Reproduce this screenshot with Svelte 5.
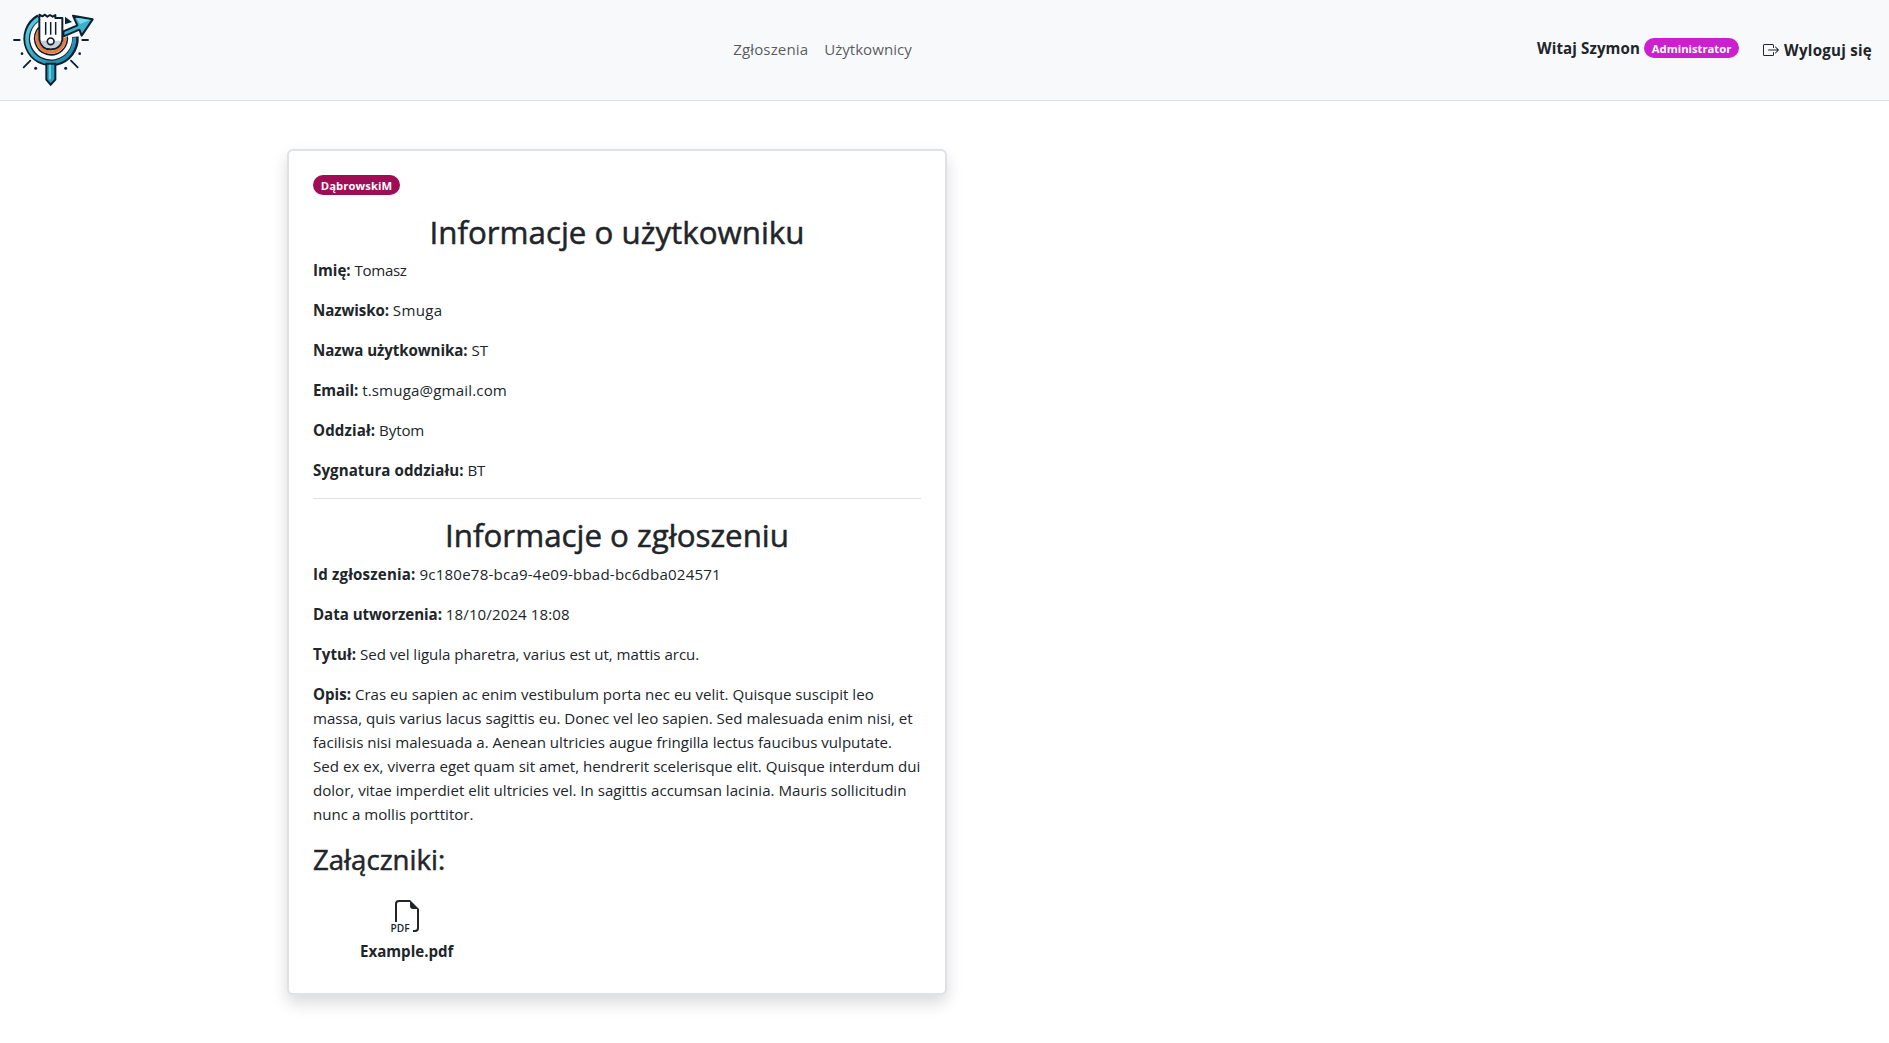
<script>
  // track: letter-spacing in px for each label and value
  const user = [
    { label: 'Imię:', lt: 0, value: 'Tomasz', vt: -0.35 },
    { label: 'Nazwisko:', lt: -0.1, value: 'Smuga', vt: 0.3 },
    { label: 'Nazwa użytkownika:', lt: -0.09, value: 'ST', vt: 0 },
    { label: 'Email:', lt: -0.12, value: 't.smuga@gmail.com', vt: 0.15 },
    { label: 'Oddział:', lt: 0.13, value: 'Bytom', vt: -0.12 },
    { label: 'Sygnatura oddziału:', lt: 0.07, value: 'BT', vt: -0.3 }
  ];
  const ticket = [
    { label: 'Id zgłoszenia:', lt: 0.18, value: '9c180e78-bca9-4e09-bbad-bc6dba024571', vt: 0.19 },
    { label: 'Data utworzenia:', lt: -0.05, value: '18/10/2024 18:08', vt: 0.09 },
    { label: 'Tytuł:', lt: 0.05, value: 'Sed vel ligula pharetra, varius est ut, mattis arcu.', vt: -0.03 },
    {
      label: 'Opis:',
      lt: 0,
      value: [
        'Cras eu sapien ac enim vestibulum porta nec eu velit. Quisque suscipit leo',
        'massa, quis varius lacus sagittis eu. Donec vel leo sapien. Sed malesuada enim nisi, et',
        'facilisis nisi malesuada a. Aenean ultricies augue fringilla lectus faucibus vulputate.',
        'Sed ex ex, viverra eget quam sit amet, hendrerit scelerisque elit. Quisque interdum dui',
        'dolor, vitae imperdiet elit ultricies vel. In sagittis accumsan lacinia. Mauris sollicitudin',
        'nunc a mollis porttitor.'
      ].join('\n'),
      vt: 0
    }
  ];
</script>

{#snippet field(f)}
  <p><b style:letter-spacing="{f.lt}px">{f.label}</b> <span style:letter-spacing="{f.vt}px">{f.value}</span></p>
{/snippet}

<header>
  <a class="brand" href="#top" aria-label="Logo">
    <svg width="80" height="80" viewBox="36 30 240 240">
      <defs>
        <linearGradient id="teal" x1="0" y1="0" x2="1" y2="1">
          <stop offset="0" stop-color="#5fd0e0" />
          <stop offset="0.5" stop-color="#35a9c4" />
          <stop offset="1" stop-color="#1c7fa3" />
        </linearGradient>
      </defs>
      <g fill="none">
        <path d="M117 52A73 73 0 1 0 226 110" stroke="#0b2033" stroke-width="20" />
        <path d="M117 55A71 71 0 1 0 223 112" stroke="url(#teal)" stroke-width="11" />
        <path d="M117 74A55 55 0 1 0 207 105" stroke="#fff" stroke-width="9" />
        <path d="M117 82A49 49 0 1 0 201 105" stroke="#0b2033" stroke-width="5" />
        <path d="M117 92A42 42 0 1 0 194 106" stroke="#e9793d" stroke-width="10" />
      </g>
      <path d="M139 191h27v48l-14 15-13-15z" fill="#2d9dbd" stroke="#0b2033" stroke-width="6" />
      <path d="M150 194v44" stroke="#65cfe0" stroke-width="6" />
      <path d="M186 84L225 68 210 38 290 52 246 122 234 95 190 115z" fill="#f8f9fa" />
      <path d="M190 94L232 76 219 47 278 58 245 107 238 89 191 109z" fill="#3ab2ca" stroke="#0b2033" stroke-width="6" stroke-linejoin="round" />
      <path d="M228 53L270 60 240 72z" fill="#7adbe8" />
      <path d="M195 50L216 66 195 73z" fill="#0b2033" />
      <path d="M118 44l9 5 8-5 7 6 8-5 8 5 8-5v9h21v66q-7 28-35 28t-34-30z" fill="#fff" stroke="#0b2033" stroke-width="6" stroke-linejoin="round" />
      <path d="M121 122h63q-9 23-32 23t-31-23z" fill="#c8ced4" />
      <path d="M137 66v38M152 66v38M167 66v38" stroke="#0b2033" stroke-width="4.5" />
      <circle cx="152" cy="124" r="10" fill="#fff" stroke="#0b2033" stroke-width="5" />
      <g stroke="#0b2033" stroke-width="5.5" stroke-linecap="round">
        <path d="M42 120h17M247 120h17M91 182L71 202M213 182L233 202" />
      </g>
      <g fill="#0b2033">
        <circle cx="66" cy="161" r="4" /><circle cx="239" cy="161" r="4" />
        <circle cx="107" cy="205" r="4.5" /><circle cx="197" cy="205" r="4.5" />
      </g>
    </svg>
  </a>
  <nav>
    <a class="tickets" href="#tickets">Zgłoszenia</a>
    <a href="#users">Użytkownicy</a>
  </nav>
  <div class="account">
    <div class="hello"><b>Witaj Szymon</b><span class="badge admin">Administrator</span></div>
    <a class="logout" href="#logout">
      <svg width="16" height="16" viewBox="0 0 16 16" fill="currentColor">
        <path fill-rule="evenodd" d="M10 12.5a.5.5 0 0 1-.5.5h-8a.5.5 0 0 1-.5-.5v-9a.5.5 0 0 1 .5-.5h8a.5.5 0 0 1 .5.5v2a.5.5 0 0 0 1 0v-2A1.5 1.5 0 0 0 9.5 2h-8A1.5 1.5 0 0 0 0 3.5v9A1.5 1.5 0 0 0 1.5 14h8a1.5 1.5 0 0 0 1.5-1.5v-2a.5.5 0 0 0-1 0z" />
        <path fill-rule="evenodd" d="M15.854 8.354a.5.5 0 0 0 0-.708l-3-3a.5.5 0 0 0-.708.708L14.293 7.5H5.5a.5.5 0 0 0 0 1h8.793l-2.147 2.146a.5.5 0 0 0 .708.708z" />
      </svg>
      <b>Wyloguj się</b>
    </a>
  </div>
</header>

<main>
  <section class="card">
    <span class="badge assignee">DąbrowskiM</span>
    <h2>Informacje o użytkowniku</h2>
    {#each user as f}{@render field(f)}{/each}
    <hr />
    <h2>Informacje o zgłoszeniu</h2>
    {#each ticket as f}{@render field(f)}{/each}
    <h3>Załączniki:</h3>
    <div class="files">
      <a class="file" href="#file">
        <svg width="32" height="32" viewBox="0 0 16 16" fill="currentColor">
          <path d="M14 4.5V14a2 2 0 0 1-2 2h-1v-1h1a1 1 0 0 0 1-1V4.5h-2A1.5 1.5 0 0 1 9.5 3V1H4a1 1 0 0 0-1 1v9H2V2a2 2 0 0 1 2-2h5.5z" />
          <text x="-0.3" y="15.85">PDF</text>
        </svg>
        <b>Example.pdf</b>
      </a>
    </div>
  </section>
</main>

<style>
  :global(body) {
    margin: 0;
    background: #fff;
    color: #212529;
    font: 15.1px/24px 'Open Sans', 'Noto Sans', sans-serif;
  }
  a {
    color: inherit;
    text-decoration: none;
  }
  header {
    box-sizing: border-box;
    height: 101px;
    padding: 0 17px 0 12px;
    display: flex;
    justify-content: space-between;
    align-items: center;
    background: #f8f9fa;
    border-bottom: 1px solid #dee2e6;
  }
  .brand {
    display: flex;
    margin-right: 16px;
  }
  .brand svg {
    overflow: visible;
  }
  nav {
    display: flex;
    gap: 16px;
    padding-bottom: 2px;
    color: rgba(33, 37, 41, 0.75);
  }
  .tickets {
    letter-spacing: 0.1px;
  }
  .account {
    display: flex;
    align-items: center;
    gap: 24px;
    padding-bottom: 1px;
  }
  .hello {
    display: flex;
    align-items: center;
    gap: 4px;
    letter-spacing: 0.1px;
    padding-bottom: 4px;
  }
  .logout {
    display: flex;
    align-items: center;
    gap: 5px;
    letter-spacing: 0.25px;
  }
  .badge {
    box-sizing: border-box;
    display: block;
    width: fit-content;
    height: 20px;
    padding: 0 7.8px;
    border-radius: 10px;
    color: #fff;
    font-size: 11.25px;
    line-height: 21px;
    font-weight: 700;
    letter-spacing: 0;
  }
  .admin {
    background: #cc1fcf;
  }
  .assignee {
    background: #9f0e54;
    margin-bottom: 17px;
    letter-spacing: 0.08px;
  }
  main {
    padding: 48px 0 48px 287px;
  }
  .card {
    box-sizing: border-box;
    width: 660px;
    height: 846px;
    padding: 24px;
    border: 2px solid #dee2e6;
    border-radius: 6px;
    background: #fff;
    box-shadow: 0 8px 16px rgba(0, 0, 0, 0.15);
  }
  h2,
  h3 {
    margin: 0;
    font-weight: 500;
    -webkit-text-stroke: 0.5px currentColor;
  }
  h2 {
    padding: 1px 0 7px;
    font-size: 31.3px;
    line-height: 38.4px;
    text-align: center;
  }
  p {
    margin: 0 0 16px;
    white-space: pre-line;
  }
  hr {
    margin: 16px 0;
    border: 0;
    border-top: 1px solid #dee2e6;
  }
  h3 {
    padding: 1px 0 8px;
    font-size: 27.6px;
    line-height: 33.6px;
  }
  .files {
    display: flex;
    padding: 16px 0 0 47px;
  }
  .file {
    display: flex;
    flex-direction: column;
    align-items: center;
    gap: 7px;
  }
  .file svg {
    overflow: visible;
  }
  .file text {
    font: 600 5.1px 'Open Sans', sans-serif;
  }
</style>
